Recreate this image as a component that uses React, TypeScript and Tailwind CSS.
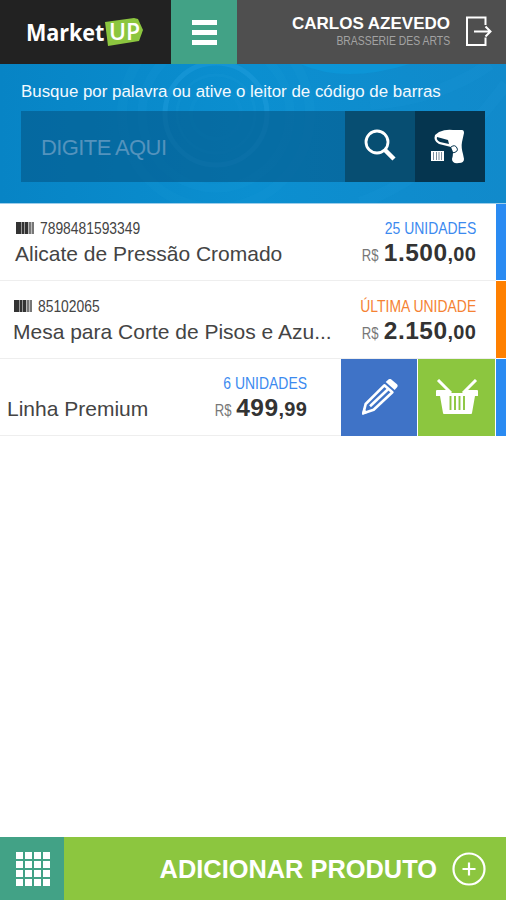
type Product = {
    code?: string;
    name: string;
    units: string;
    price: string;
    cents: string;
    last?: boolean;
}

const products: Product[] = [
    {code: '7898481593349', name: 'Alicate de Pressão Cromado', units: '25 UNIDADES', price: '1.500', cents: ',00'},
    {code: '85102065', name: 'Mesa para Corte de Pisos e Azu...', units: 'ÚLTIMA UNIDADE', price: '2.150', cents: ',00', last: true},
]

function Logo() {
    return (
        <div className="flex h-16 w-[171px] items-center bg-[#222222] pl-[26px] font-['Open_Sans',sans-serif] text-white">
            <span className="w-[79px] origin-left scale-x-[0.9] text-[24px] leading-8 font-bold tracking-[-0.1px]">Market</span>
            <span className="relative h-8 w-[38px] pl-[4px] text-[23px] leading-[31px] font-semibold">
                <svg className="absolute top-0 left-0" width="38" height="32" viewBox="0 0 38 32">
                    <path d="M0 6 29 2 33 3 38 14 34 25 3 30Z" fill="#8cc63f" />
                </svg>
                <span className="relative">UP</span>
            </span>
        </div>
    )
}

function Header() {
    return (
        <header className="flex h-16 bg-[#4f4f4f]">
            <Logo />
            <button className="flex w-[66px] flex-col items-center justify-center gap-[5px] bg-[#42a286]">
                <span className="h-[5px] w-[25px] bg-white" />
                <span className="h-[5px] w-[25px] bg-white" />
                <span className="h-[5px] w-[25px] bg-white" />
            </button>
            <div className="flex flex-1 flex-col items-end pt-[14px] whitespace-nowrap">
                <span className="text-[17px] leading-[19px] font-bold text-white">CARLOS AZEVEDO</span>
                <span className="origin-right scale-x-[0.8] text-[13px] leading-4 text-[#a3a3a3]">BRASSERIE DES ARTS</span>
            </div>
            <svg className="mt-4 mr-[14px] ml-4" width="26" height="31" viewBox="0 0 26 31" fill="none" stroke="#fff" strokeWidth="2">
                <path d="M19.5 9V1.5H1V29H19.5V21.5" />
                <path d="M8 15.5H24M19.5 10.5 24.5 15.5 19.5 20.5" />
            </svg>
        </header>
    )
}

function Search() {
    return (
        <section className="relative h-[140px] overflow-hidden border-b border-[#9dcdea] bg-[#0986c8] bg-linear-to-r from-[#0784c5] via-[#0b8fd0] to-[#118acb] pt-[18px] pr-[21px] pl-[21px]">
            {/* faint rings behind the form */}
            <svg className="absolute inset-0" width="506" height="139" viewBox="0 0 506 139" fill="none" stroke="#27a4e2">
                <circle cx="216" cy="50" r="51" strokeWidth="5" opacity=".35" />
                <circle cx="216" cy="50" r="39" strokeWidth="3" opacity=".12" />
                <circle cx="216" cy="50" r="25" strokeWidth="4" opacity=".08" />
                <circle cx="216" cy="50" r="74" strokeWidth="9" opacity=".1" />
                <circle cx="216" cy="50" r="94" strokeWidth="10" opacity=".07" />
                <path d="M300 0Q345 20 410 0Z" fill="#0b9de0" stroke="none" opacity=".5" />
                <path d="M370 40Q440 35 490 0M360 139Q440 110 506 20" strokeWidth="12" opacity=".1" />
            </svg>
            <p className="relative text-[16.9px] leading-5 whitespace-nowrap text-[#f3faff]">Busque por palavra ou ative o leitor de código de barras</p>
            <div className="relative mt-[9px] flex h-[71px]">
                <div className="flex flex-1 items-center bg-[#045687]/60 pt-px pl-[20px] text-[22px] tracking-[-0.6px] text-[#5493bd]">DIGITE AQUI</div>
                <button className="flex w-[70px] items-center justify-center bg-[#074e72] pb-[3px]">
                    <svg width="32" height="32" viewBox="0 0 32 32" fill="none" stroke="#fff">
                        <circle cx="13" cy="13" r="11" strokeWidth="2.8" />
                        <path d="M21 21 30 30" strokeWidth="4.5" />
                    </svg>
                </button>
                <button className="flex w-[70px] items-center justify-center bg-[#05354f]">
                    <svg className="ml-[-5px]" width="34" height="36" viewBox="0 0 34 36">
                        <path d="M8 3Q15 0 22 1H31Q33 1 33 4L31 13Q30 18 32 25L33 30Q33 34 28 34 21 35 21 30 22 27 22 23L20 18 8 15Q2 12 4 6Z" fill="#fff" />
                        <path d="M6 8 17 11 18 15 9 13Q5 11 6 8Z" fill="#05354f" />
                        <path d="M20 18Q24 15 26 19T21 24" fill="none" stroke="#05354f" strokeWidth="1" />
                        <path d="M0 22H13V32H0Z" fill="#fff" />
                        <path d="M2.5 23V31M5.5 23V31M8 23V31M10.5 23V31" stroke="#7c8f9f" strokeWidth="1" />
                    </svg>
                </button>
            </div>
        </section>
    )
}

function Barcode() {
    return (
        <svg width="18" height="12" viewBox="0 0 18 12">
            <path d="M0 0H5V12H0ZM6 0H8V12H6ZM9 0H12V12H9Z" fill="#333" />
            <path d="M5 0H6V12H5ZM8 0H9V12H8Z" fill="#999" />
            <path d="M13 0H15V12H13ZM16 0H18V12H16Z" fill="#777" />
            <path d="M12 0H13V12H12ZM15 0H16V12H15Z" fill="#bbb" />
        </svg>
    )
}

function Price({units, price, cents, last}: Product) {
    return (
        <div className="flex flex-col items-end whitespace-nowrap">
            <span className={last ? "origin-right scale-x-[0.845] text-[16.5px] leading-5 text-[#f58233]" : "origin-right scale-x-[0.845] text-[16.5px] leading-5 text-[#3c8aef]"}>{units}</span>
            <span className="mt-[2px] flex items-baseline leading-[26px] font-bold text-[#333]">
                <span className="origin-right scale-x-[0.82] text-[16px] font-normal text-[#777]">R$</span>
                <span className="ml-[5px] text-[24.5px] tracking-[0.5px]">{price}</span>
                <span className="text-[20px] tracking-[0.2px]">{cents}</span>
            </span>
        </div>
    )
}

function ProductRow(product: Product) {
    return (
        <div className={product.last ? "flex h-[78px]" : "flex h-[77px]"}>
            <div className={product.last ? "flex flex-1 justify-between border-b border-[#eee] pt-[15px] pr-5 pl-[13px]" : "flex flex-1 justify-between border-b border-[#eee] pt-[14px] pr-5 pl-[15px]"}>
                <div className="whitespace-nowrap">
                    <div className="ml-px flex h-5 items-center gap-[6px] text-[#444]">
                        <Barcode />
                        <span className="origin-left scale-x-[0.84] text-[16.5px]">{product.code}</span>
                    </div>
                    <div className="mt-[3px] text-[21px] leading-[26px] text-[#444]">{product.name}</div>
                </div>
                <Price {...product} />
            </div>
            <div className={product.last ? "mb-px w-[10px] bg-[#ff8000]" : "mb-px w-[10px] bg-[#2a8bf2]"} />
        </div>
    )
}

// row swiped to the left, with its actions open
function OpenRow() {
    return (
        <div className="flex h-[77px]">
            <div className="flex flex-1 justify-between border-b border-[#eee] pt-[14px] pr-[34px] pl-[7px]">
                <div className="mt-[23px] text-[21px] leading-[26px] whitespace-nowrap text-[#444]">Linha Premium</div>
                <Price name="Linha Premium" units="6 UNIDADES" price="499" cents=",99" />
            </div>
            <button className="flex w-[76px] items-center justify-center bg-[#3f73c7]">
                <svg width="38" height="38" viewBox="0 0 114 114" fill="none" stroke="#fff">
                    <path d="M10 103 17 75 73 19 97 40 41 92Z" strokeWidth="8" strokeLinejoin="round" />
                    <path d="M6 107 10 88 24 101Z" fill="#fff" stroke="none" />
                    <path d="M30 82 84 31" strokeWidth="8" />
                    <path d="M77 9 86 1Q90-2 95 2L111 16Q115 20 111 25L104 33Z" fill="#fff" stroke="none" />
                </svg>
            </button>
            <button className="ml-px flex w-[77px] items-center justify-center bg-[#8cc63f]">
                <svg width="42" height="37" viewBox="0 0 42 37">
                    <path d="M1 11H11L15 14H27L31 11H41Q42 11 42 12V17H39L36 34Q36 35 35 35H8Q7 35 7 34L4 17H0V12Q0 11 1 11Z" fill="#fff" />
                    <path d="M2 1 15 14M40 1 27 14" stroke="#fff" strokeWidth="3" />
                    <path d="M14.500 17V31M19 17V31M23.500 17V31M28 17V31" stroke="#8cc63f" strokeWidth="1.900" />
                </svg>
            </button>
            <div className="ml-px w-[10px] bg-[#2a8bf2]" />
        </div>
    )
}

function Footer() {
    return (
        <footer className="mt-auto flex h-[63px] bg-[#8cc63f]">
            <button className="flex w-16 items-center justify-center bg-[#42a286] pl-px">
                <span className="grid grid-cols-4 gap-[2px]">
                    {Array.from({length: 16}, (_, i) => <span key={i} className="size-[7px] bg-white" />)}
                </span>
            </button>
            <button className="flex flex-1 items-center justify-end pr-5 whitespace-nowrap text-white">
                <span className="pt-px text-[25.4px] font-bold">ADICIONAR PRODUTO</span>
                <svg className="ml-[15px]" width="34" height="34" viewBox="0 0 34 34" fill="none" stroke="#fff" strokeWidth="2.200">
                    <circle cx="17" cy="17" r="15.500" />
                    <path d="M17 10.500V23.500M10.500 17H23.500" />
                </svg>
            </button>
        </footer>
    )
}

export default function App() {
    return (
        <div className="flex h-[900px] w-[506px] flex-col overflow-hidden bg-white font-['Liberation_Sans',Arial,sans-serif]">
            <Header />
            <Search />
            {products.map((product) => <ProductRow key={product.code} {...product} />)}
            <OpenRow />
            <Footer />
        </div>
    )
}
